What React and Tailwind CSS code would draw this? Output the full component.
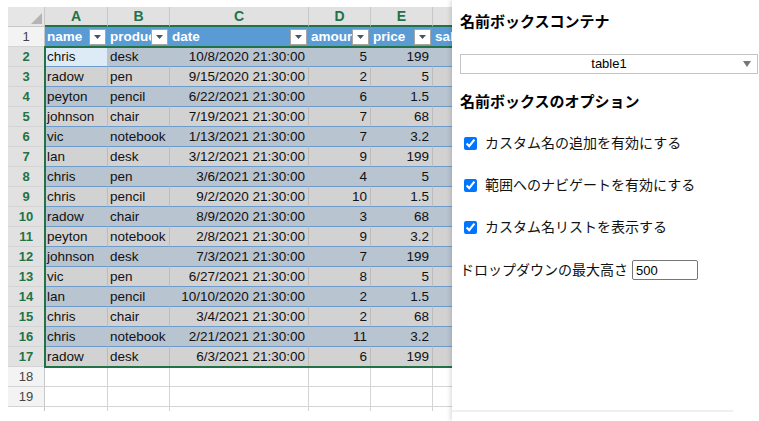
import React from "react";

const rows = [
  ["chris", "desk", "10/8/2020 21:30:00", 5, 199],
  ["radow", "pen", "9/15/2020 21:30:00", 2, 5],
  ["peyton", "pencil", "6/22/2021 21:30:00", 6, 1.5],
  ["johnson", "chair", "7/19/2021 21:30:00", 7, 68],
  ["vic", "notebook", "1/13/2021 21:30:00", 7, 3.2],
  ["lan", "desk", "3/12/2021 21:30:00", 9, 199],
  ["chris", "pen", "3/6/2021 21:30:00", 4, 5],
  ["chris", "pencil", "9/2/2020 21:30:00", 10, 1.5],
  ["radow", "chair", "8/9/2020 21:30:00", 3, 68],
  ["peyton", "notebook", "2/8/2021 21:30:00", 9, 3.2],
  ["johnson", "desk", "7/3/2021 21:30:00", 7, 199],
  ["vic", "pen", "6/27/2021 21:30:00", 8, 5],
  ["lan", "pencil", "10/10/2020 21:30:00", 2, 1.5],
  ["chris", "chair", "3/4/2021 21:30:00", 2, 68],
  ["chris", "notebook", "2/21/2021 21:30:00", 11, 3.2],
  ["radow", "desk", "6/3/2021 21:30:00", 6, 199],
];

const cols = [
  { key: "A", w: "w-[63px]" },
  { key: "B", w: "w-[62px]" },
  { key: "C", w: "w-[139px]" },
  { key: "D", w: "w-[62px]" },
  { key: "E", w: "w-[62px]" },
  { key: "F", w: "w-[62px]" },
];

const FilterBtn = () => (
  <div className="absolute right-[2px] top-[2px] w-[17px] h-[16px] bg-white border border-[#a6a6a6] flex items-center justify-center">
    <svg width="7" height="4" viewBox="0 0 7 4">
      <path d="M0 0 L7 0 L3.5 4 Z" fill="#44546a" />
    </svg>
  </div>
);

const headers = ["name", "product", "date", "amount", "price", "sales"];

const App = () => {
  return (
    <div
      className="relative w-[759px] h-[421px] bg-white flex overflow-hidden"
      style={{ fontFamily: "'Liberation Sans', Arial, sans-serif" }}
    >
      {/* sheet */}
      <div className="relative w-[452px] shrink-0 pt-[7px] pl-[8px] overflow-hidden">
        {/* column header */}
        <div className="flex h-[20px]">
          <div className="relative w-[37px] shrink-0 h-full bg-[#e6e6e6] border-r border-b border-[#c8c8c8]">
            <div className="absolute right-[2px] bottom-[2px] w-0 h-0 border-l-[11px] border-l-transparent border-b-[11px] border-b-[#b4b4b4]" />
          </div>
          {cols.map((c) => (
            <div
              key={c.key}
              className={`${c.w} shrink-0 h-full bg-[#e1e1e1] border-r border-[#c8c8c8] border-b-2 border-b-[#217346] flex items-center justify-center text-[14px] font-bold text-[#217346]`}
            >
              {c.key}
            </div>
          ))}
        </div>

        {/* row 1 - table header */}
        <div className="flex h-[20px]">
          <div className="w-[37px] shrink-0 bg-[#f3f3f3] border-r border-[#c8c8c8] border-b border-b-[#d4d4d4] flex items-center justify-center text-[13px] text-[#444]">
            1
          </div>
          {cols.map((c, i) => (
            <div
              key={c.key}
              className={`relative ${c.w} shrink-0 h-full bg-[#5b9bd5] overflow-hidden whitespace-nowrap text-white font-bold text-[13.5px] leading-[20px] pl-[2px]`}
            >
              {i < 5 ? headers[i] : "sal"}
              {i < 5 && <FilterBtn />}
            </div>
          ))}
        </div>

        {/* data rows */}
        {rows.map((r, ri) => {
          const blue = ri % 2 === 0;
          const bg = blue ? "bg-[#b8c4d0]" : "bg-[#d2d2d2]";
          const vline = blue ? "border-r-[#b8c4d0]" : "border-r-[#bcbcbc]";
          return (
            <div key={ri} className="flex h-[20px]">
              <div className="w-[37px] shrink-0 bg-[#e1e1e1] border-r border-[#c8c8c8] border-b border-b-[#d4d4d4] flex items-center justify-center text-[13px] font-bold text-[#217346]">
                {ri + 2}
              </div>
              {cols.map((c, ci) => {
                const active = ri === 0 && ci === 0;
                const val = ci < 5 ? r[ci] : "";
                const right = ci >= 2;
                return (
                  <div
                    key={c.key}
                    className={`${c.w} shrink-0 h-full ${active ? "bg-[#ddebf7]" : bg} border-r ${vline} border-b border-b-[#6d9ccb] whitespace-nowrap overflow-hidden text-[13.5px] leading-[19px] text-[#111] ${right ? "text-right pr-[3px]" : "pl-[2px]"}`}
                  >
                    {val}
                  </div>
                );
              })}
            </div>
          );
        })}

        {/* empty rows */}
        {[18, 19].map((n) => (
          <div key={n} className="flex h-[20px]">
            <div className="w-[37px] shrink-0 bg-[#f3f3f3] border-r border-[#c8c8c8] border-b border-b-[#d4d4d4] flex items-center justify-center text-[13px] text-[#444]">
              {n}
            </div>
            {cols.map((c) => (
              <div
                key={c.key}
                className={`${c.w} shrink-0 h-full bg-white border-r border-[#d4d4d4] border-b`}
              />
            ))}
          </div>
        ))}
        <div className="flex h-[4px]">
          <div className="w-[37px] shrink-0 border-r border-[#c8c8c8]" />
          {cols.map((c) => (
            <div key={c.key} className={`${c.w} shrink-0 border-r border-[#d4d4d4]`} />
          ))}
        </div>

        {/* selection outline */}
        <div className="absolute left-[44px] top-[46px] w-[420px] h-[322px] border-2 border-[#217346] pointer-events-none" />
      </div>

      {/* side panel */}
      <div
        className="relative flex-1 bg-white pl-[8px] shadow-[-2px_0_4px_rgba(0,0,0,0.12)]"
        style={{ fontFamily: "'Liberation Sans', 'Noto Sans CJK JP', sans-serif" }}
      >
        <div className="mt-[12px] text-[15px] font-bold text-black leading-[20px]">
          名前ボックスコンテナ
        </div>
        <div className="relative mt-[22px] w-[298px] h-[20px] border border-[#c4c4c4] bg-white flex items-center justify-center text-[13px] text-black">
          table1
          <svg className="absolute right-[6px] top-[6px]" width="8" height="6" viewBox="0 0 8 6">
            <path d="M0 0 L8 0 L4 6 Z" fill="#777" />
          </svg>
        </div>
        <div className="mt-[18px] text-[15px] font-bold text-black leading-[20px]">
          名前ボックスのオプション
        </div>

        <div className="mt-[21px] flex flex-col gap-[22px] pl-[4px]">
          {[
            "カスタム名の追加を有効にする",
            "範囲へのナビゲートを有効にする",
            "カスタム名リストを表示する",
          ].map((t) => (
            <label key={t} className="flex items-center h-[20px] text-[14px] text-[#111]">
              <input
                type="checkbox"
                defaultChecked
                className="w-[13px] h-[13px] mr-[8px] accent-[#0075ff]"
              />
              {t}
            </label>
          ))}
        </div>

        <div className="mt-[23px] flex items-center text-[14px] text-[#111] h-[20px]">
          ドロップダウンの最大高さ
          <input
            type="text"
            defaultValue="500"
            className="ml-[4px] w-[66px] h-[20px] border border-[#767676] rounded-[2px] px-[3px] text-[13px] text-black outline-none"
          />
        </div>

        <div className="absolute left-0 bottom-[9px] w-[281px] h-[2px] bg-[#f0f0f0]" />
      </div>
    </div>
  );
};

export default App;
